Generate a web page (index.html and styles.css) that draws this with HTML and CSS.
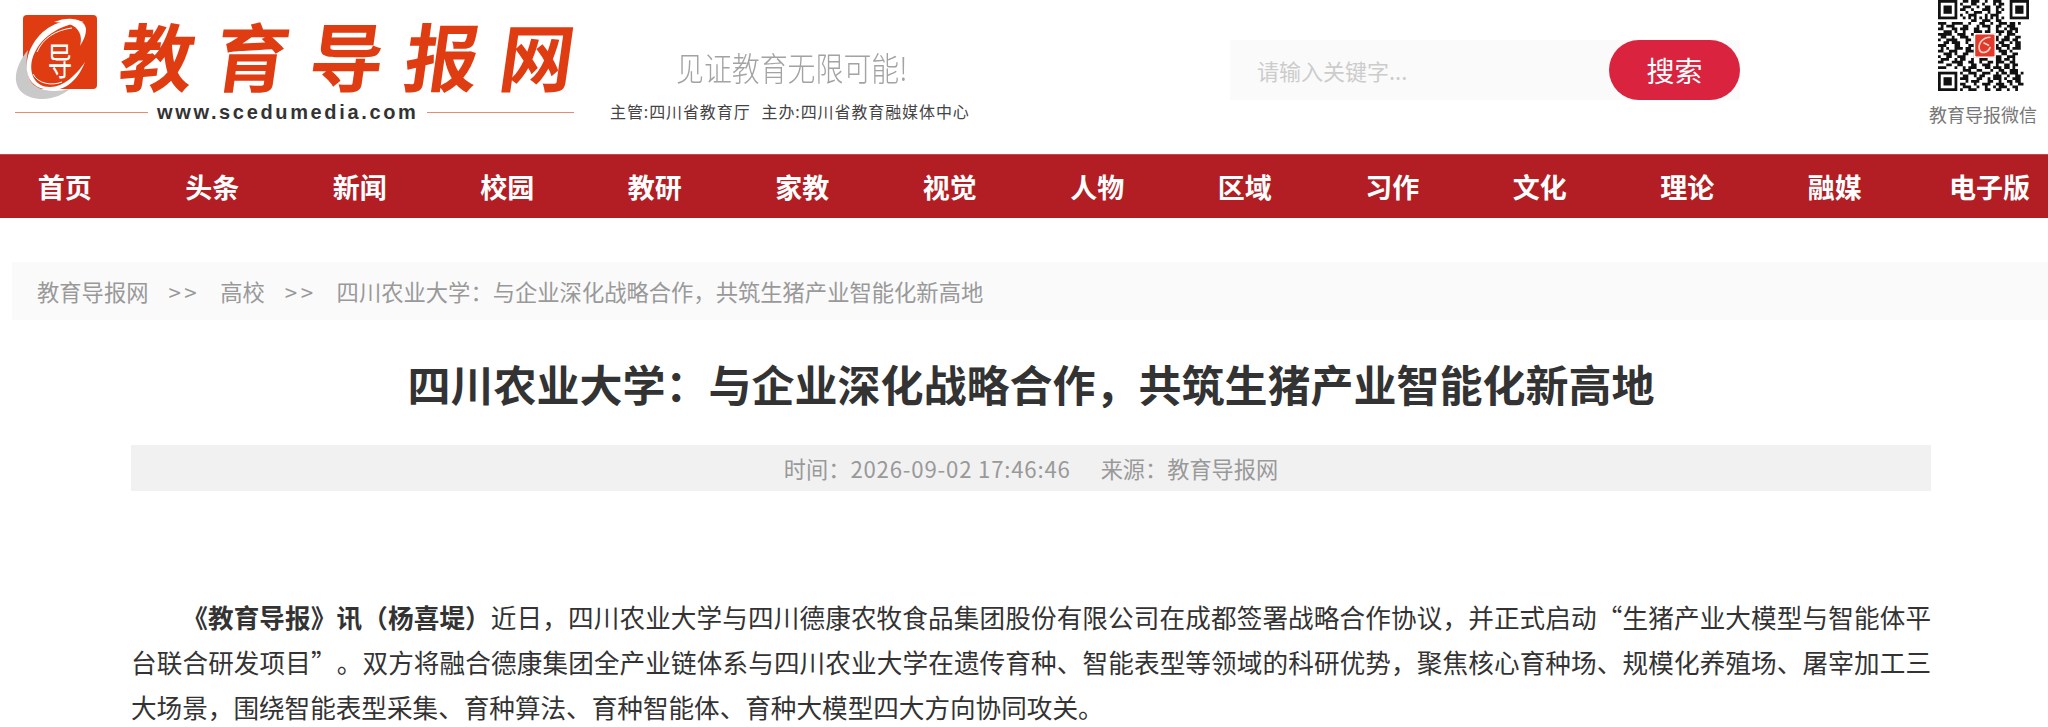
FILE: index.html
```html
<!DOCTYPE html>
<html lang="zh-CN">
<head>
    <meta charset="UTF-8">
    <title>四川农业大学：与企业深化战略合作，共筑生猪产业智能化新高地</title>
    <link rel="stylesheet" href="styles.css">
</head>
<body>
    <header class="top">
        <div class="logo">
            <div class="logo-main">
                <svg class="emblem" viewBox="0 0 100 100" width="100" height="100">
                    <rect x="23" y="15" width="74" height="74" rx="4" fill="#e03c12"/>
                    <path fill="#c9c9c9" d="M28 50C13 68 10 90 30 97C45 102 60 97 70 89C52 93 36 91 30 80C26 72 26 60 28 50Z"/>
                    <path fill="#fff" d="M84 22C60 16 36 30 28 56C23 76 32 90 52 90C66 90 78 80 85 62C76 75 64 87 50 87C35 87 29 74 32 60C38 38 60 24 84 22Z"/>
                    <path fill="#fff" d="M54 22C68 16 85 18 86 29C86 36 83 41 80 46C83 36 79 27 69 24C63 23 58 22 54 22Z"/>
                    <path fill="none" stroke="#fff" stroke-width="1" d="M37 52C43 38 56 30 72 28M33 74C38 84 52 86 62 82"/>
                    <text class="emblem-glyph" text-anchor="middle" transform="translate(60 75) scale(.72 1.12)">导</text>
                </svg>
                <div class="logo-name"><span>教</span><span>育</span><span>导</span><span>报</span><span>网</span></div>
            </div>
            <div class="logo-url"><i></i><span>www.scedumedia.com</span><i></i></div>
        </div>
        <div class="slogan">
            <div class="slogan-big">见证教育无限可能!</div>
            <div class="slogan-small"><span>主管:四川省教育厅</span><span>主办:四川省教育融媒体中心</span></div>
        </div>
        <form class="search">
            <input type="text" placeholder="请输入关键字...">
            <button type="button">搜索</button>
        </form>
        <div class="wechat">
            <svg class="qr" viewBox="0 0 33 33" width="91" height="91">
                <g fill="none" stroke="#111" stroke-width="1">
                    <rect x=".5" y=".5" width="6" height="6"/>
                    <rect x="26.5" y=".5" width="6" height="6"/>
                    <rect x=".5" y="26.5" width="6" height="6"/>
                </g>
                <g fill="#111">
                    <rect x="2" y="2" width="3" height="3"/>
                    <rect x="28" y="2" width="3" height="3"/>
                    <rect x="2" y="28" width="3" height="3"/>
                </g>
                <path fill="none" stroke="#111" stroke-width="1" d="
                    M9 .5h2m1 0h3m2 0h1m2 0h3
                    M8 1.5h1m3 0h2m2 0h1m3 0h1m1 0h2
                    M9 2.5h3m2 0h1m2 0h2m2 0h2
                    M8 3.5h2m2 0h1m3 0h3m2 0h1m1 0h1
                    M10 4.5h1m2 0h3m2 0h1m2 0h2
                    M8 5.5h1m2 0h3m3 0h1m1 0h3
                    M9 6.5h1m1 0h1m1 0h1m1 0h1m1 0h1m1 0h1m1 0h1m1 0h1
                    M12 7.5h2m2 0h3m2 0h2
                    M0 8.5h3m2 0h4m2 0h1m3 0h2m2 0h1m2 0h3m1 0h2m1 0h1
                    M1 9.5h1m1 0h3m3 0h2m3 0h1m1 0h3m2 0h2m2 0h3
                    M0 10.5h2m3 0h2m1 0h3m2 0h2m3 0h1m2 0h1m2 0h1m1 0h3
                    M2 11.5h3m1 0h1m2 0h1m3 0h3m1 0h2m2 0h3m1 0h2m1 0h1
                    M0 12.5h5m2 0h3m2 0h1m6 0h2m1 0h1m2 0h3
                    M1 13.5h2m2 0h1m2 0h3m2 0h1m7 0h1m2 0h2m2 0h2
                    M0 14.5h1m2 0h4m3 0h2m8 0h2m1 0h3m1 0h2
                    M2 15.5h2m1 0h3m2 0h1m2 0h1m8 0h2m2 0h1m1 0h2
                    M0 16.5h3m3 0h2m3 0h2m8 0h1m1 0h3m2 0h2
                    M1 17.5h1m1 0h1m2 0h3m1 0h2m1 0h1m7 0h2m2 0h1m1 0h3
                    M0 18.5h2m2 0h3m3 0h3m6 0h1m2 0h3m1 0h1
                    M2 19.5h3m1 0h1m2 0h2m2 0h1m1 0h2m1 0h3m2 0h2m2 0h2
                    M0 20.5h1m2 0h2m2 0h3m3 0h2m3 0h1m1 0h3m2 0h3
                    M1 21.5h3m2 0h1m1 0h2m2 0h1m2 0h3m3 0h2m1 0h2m1 0h1
                    M0 22.5h2m3 0h4m2 0h2m2 0h1m2 0h2m1 0h3m2 0h2
                    M3 23.5h2m2 0h2m3 0h2m2 0h3m2 0h1m2 0h2m1 0h2
                    M0 24.5h3m3 0h1m2 0h1m1 0h3m3 0h2m1 0h3m1 0h2m1 0h1
                    M9 25.5h3m2 0h2m3 0h1m2 0h2m2 0h3
                    M8 26.5h1m2 0h3m2 0h3m2 0h1m1 0h2m1 0h3m1 0h1
                    M9 27.5h2m2 0h1m1 0h2m3 0h3m2 0h1m2 0h2
                    M8 28.5h3m3 0h2m2 0h1m1 0h3m1 0h1m2 0h3
                    M10 29.5h1m1 0h3m3 0h2m2 0h1m2 0h2m1 0h2
                    M8 30.5h2m3 0h1m2 0h3m2 0h3m2 0h1m2 0h2
                    M9 31.5h3m2 0h1m2 0h1m2 0h1m1 0h3m2 0h2
                    M8 32.5h1m2 0h3m3 0h2m2 0h2m2 0h1m2 0h1"/>
                <rect x="13" y="12" width="8" height="9" fill="#fff"/>
                <rect x="13.5" y="12.5" width="7" height="8" rx=".5" fill="#e23a2a"/>
                <path fill="none" stroke="#f7d0c8" stroke-width=".6" d="M19 13.5C16 13.5 14.5 16 15 18C15.5 19.5 18 19.5 19 17M16.5 15.5L18.5 16.5"/>
            </svg>
            <div class="qr-label">教育导报微信</div>
        </div>
    </header>

    <nav class="nav">
        <a href="#">首页</a>
        <a href="#">头条</a>
        <a href="#">新闻</a>
        <a href="#">校园</a>
        <a href="#">教研</a>
        <a href="#">家教</a>
        <a href="#">视觉</a>
        <a href="#">人物</a>
        <a href="#">区域</a>
        <a href="#">习作</a>
        <a href="#">文化</a>
        <a href="#">理论</a>
        <a href="#">融媒</a>
        <a href="#">电子版</a>
    </nav>

    <div class="crumbs">
        <a href="#">教育导报网</a>
        <span class="sep">&gt;&gt;</span>
        <a href="#">高校</a>
        <span class="sep">&gt;&gt;</span>
        <a href="#">四川农业大学：与企业深化战略合作，共筑生猪产业智能化新高地</a>
    </div>

    <main class="article">
        <h1>四川农业大学：与企业深化战略合作，共筑生猪产业智能化新高地</h1>
        <div class="meta">
            <span>时间：<span class="date">2026-09-02 17:46:46</span></span>
            <span>来源：教育导报网</span>
        </div>
        <p class="content"><b>《教育导报》讯（杨喜堤）</b>近日，四川农业大学与四川德康农牧食品集团股份有限公司在成都签署战略合作协议，并正式启动“生猪产业大模型与智能体平台联合研发项目”。双方将融合德康集团全产业链体系与四川农业大学在遗传育种、智能表型等领域的科研优势，聚焦核心育种场、规模化养殖场、屠宰加工三大场景，围绕智能表型采集、育种算法、育种智能体、育种大模型四大方向协同攻关。</p>
    </main>
</body>
</html>
```

FILE: styles.css
```css
* {
    box-sizing: border-box;
}

body {
    margin: 0;
    background-color: #fff;
    color: #333;
    font-family: "Noto Sans CJK SC", "Liberation Sans", sans-serif;
}

a {
    color: inherit;
    text-decoration: none;
}

/* header */
.top {
    display: flex;
    height: 154px;
    overflow: hidden;
}

.logo {
    width: 610px;
    padding-left: 15px;
}

.logo-main {
    display: flex;
    height: 100px;
    margin-left: -15px;
}

.emblem {
    flex: none;
}

.emblem-glyph {
    fill: #fff;
    font-size: 34px;
}

.logo-name {
    display: flex;
    gap: 21px;
    margin-left: 21px;
    color: #e03c12;
    font-size: 74px;
    font-weight: 700;
    line-height: 107px;
}

.logo-name span {
    display: block;
    height: 107px;
    transform: skewX(-8deg);
}

.logo-url {
    display: flex;
    align-items: center;
    gap: 9px;
    width: 559px;
    height: 26px;
    margin-top: -1px;
    color: #333;
    font-family: "Liberation Sans", sans-serif;
    font-size: 20px;
    font-weight: 700;
    letter-spacing: 2.65px;
}

.logo-url i {
    flex: 1;
    height: 1px;
    background-color: #e98a72;
}

.logo-url i:first-child {
    flex: 0 0 133px;
}

.slogan {
    width: 620px;
    padding-top: 46px;
}

.slogan-big {
    margin-left: 66px;
    color: #a3a3a3;
    font-size: 30px;
    font-weight: 300;
    line-height: 42px;
    transform: scale(.93, 1.08);
    transform-origin: left center;
}

.slogan-small {
    display: flex;
    gap: 11px;
    margin-top: 13px;
    color: #444;
    font-size: 16px;
    letter-spacing: .9px;
    line-height: 20px;
}

.search {
    display: flex;
    flex: none;
    width: 510px;
    height: 60px;
    margin-top: 40px;
    background-color: #fafafa;
}

.search input {
    flex: 1;
    min-width: 0;
    padding: 0 0 0 27px;
    border: none;
    outline: none;
    background: transparent;
    font-family: inherit;
    font-size: 22px;
}

.search input::placeholder {
    color: #ccc;
}

.search button {
    width: 131px;
    border: none;
    border-radius: 30px;
    background-color: #d9233f;
    color: #fff;
    font-family: inherit;
    font-size: 28px;
    cursor: pointer;
}

.wechat {
    width: 110px;
    margin-left: 188px;
    text-align: center;
}

.qr {
    display: block;
    margin-left: 10px;
    filter: blur(.6px);
}

.qr-label {
    margin-top: 12px;
    color: #777;
    font-size: 18px;
    line-height: 22px;
    white-space: nowrap;
}

/* nav */
.nav {
    display: grid;
    grid-template-columns: 138.5px repeat(12, 147.5px) 1fr;
    height: 64px;
    background-color: #b21e23;
    border-top: 1px solid #c4474b;
}

.nav a {
    color: #fff;
    font-size: 27px;
    font-weight: 700;
    line-height: 63px;
    text-align: center;
}

.nav a:first-child {
    padding-right: 9px;
}

.nav a:last-child {
    padding-right: 18px;
    text-align: right;
    white-space: nowrap;
}

/* breadcrumbs */
.crumbs {
    display: flex;
    gap: 20px;
    height: 58px;
    margin: 44px 0 0 12px;
    padding-left: 25px;
    background-color: #fafafa;
    color: #999;
    font-size: 22.3px;
    line-height: 58px;
}

.sep {
    letter-spacing: 3.5px;
}

/* article */
.article {
    padding: 0 117px 0 131px;
}

.article h1 {
    margin: 0;
    padding-top: 32px;
    color: #333;
    font-size: 43px;
    font-weight: 700;
    line-height: 62px;
    text-align: center;
}

.meta {
    display: flex;
    justify-content: center;
    gap: 30px;
    height: 46px;
    margin-top: 31px;
    background-color: #f1f1f1;
    color: #999;
    font-size: 22.2px;
    line-height: 46px;
}

.date {
    letter-spacing: .8px;
}

.content {
    margin: 103px 0 0;
    color: #333;
    font-size: 25.6px;
    line-height: 45px;
    text-align: justify;
    text-indent: 2em;
    text-spacing-trim: space-all;
}
```
